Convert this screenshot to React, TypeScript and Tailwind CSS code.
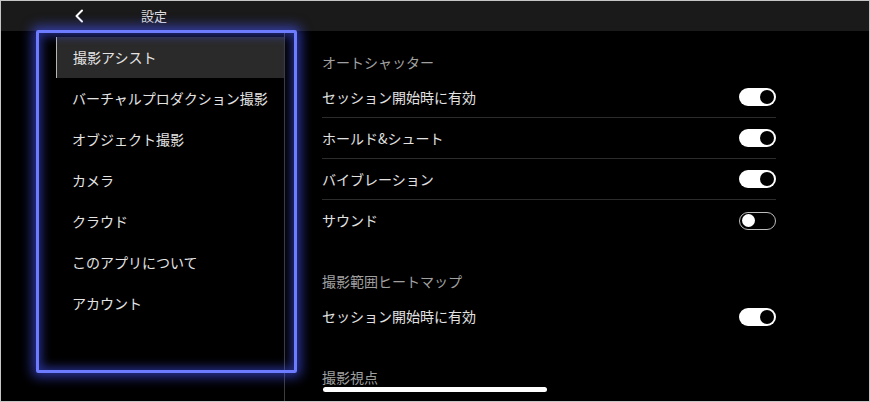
type Row = { label: string; on: boolean; divider?: boolean };

const menuItems = [
  "撮影アシスト",
  "バーチャルプロダクション撮影",
  "オブジェクト撮影",
  "カメラ",
  "クラウド",
  "このアプリについて",
  "アカウント",
];

const autoShutter: Row[] = [
  { label: "セッション開始時に有効", on: true, divider: true },
  { label: "ホールド&シュート", on: true, divider: true },
  { label: "バイブレーション", on: true, divider: true },
  { label: "サウンド", on: false },
];

const BackIcon = (): JSX.Element => (
  <svg
    width="10"
    height="14"
    viewBox="0 0 10 14"
    fill="none"
    stroke="white"
    strokeWidth="2"
    strokeLinecap="round"
    strokeLinejoin="round"
    className="ml-[73px]"
  >
    <path d="M8 1.5 2.5 7 8 12.5" />
  </svg>
);

const Toggle = ({ on }: { on: boolean }): JSX.Element => {
  if (on) {
    return (
      <span className="flex h-[18px] w-[37px] items-center justify-end rounded-full bg-white pr-[2px]">
        <span className="h-[14px] w-[14px] rounded-full bg-black" />
      </span>
    );
  }
  return (
    <span className="flex h-[18px] w-[37px] items-center rounded-full border border-[#bdbdbd] pl-[2px]">
      <span className="h-[13px] w-[13px] rounded-full bg-white" />
    </span>
  );
};

const SettingRow = ({ row }: { row: Row }): JSX.Element => (
  <div
    className={`flex h-[41px] items-center justify-between ${
      row.divider ? "border-b border-[#2c2c2c]" : ""
    }`}
  >
    <span className="text-[14px] text-[#e2e2e2]">{row.label}</span>
    <Toggle on={row.on} />
  </div>
);

const SectionTitle = ({
  title,
  first,
}: {
  title: string;
  first?: boolean;
}): JSX.Element => (
  <div
    className={`text-[14px] leading-[20px] text-[#a0a0a0] ${
      first ? "pt-[21px] pb-[5px]" : "pt-[30px] pb-[5px]"
    }`}
  >
    {title}
  </div>
);

const App = (): JSX.Element => {
  return (
    <div
      className="relative flex h-[402px] w-[870px] flex-col overflow-hidden border border-[#c6c6c6] bg-black"
      style={{ fontFamily: '"Noto Sans CJK JP", "Noto Sans", sans-serif' }}
    >
      <div className="flex h-[30px] shrink-0 items-center bg-[#1a1a1a]">
        <BackIcon />
        <span className="ml-[57px] text-[13px] text-[#e0e0e0]">設定</span>
      </div>
      <div className="flex min-h-0 flex-1">
        <div className="w-[284px] shrink-0 border-r border-[#3c3c3c] pt-[6px] pl-[55px]">
          {menuItems.map((item, i) => (
            <div
              key={item}
              className={`flex h-[41px] items-center pl-[16px] text-[14px] text-[#e4e4e4] ${
                i === 0 ? "border-l border-[#b5b5b5] bg-[#2a2a2a]" : ""
              }`}
            >
              {item}
            </div>
          ))}
        </div>
        <div className="w-[491px] pl-[37px]">
          <SectionTitle title="オートシャッター" first />
          {autoShutter.map((row) => (
            <SettingRow key={row.label} row={row} />
          ))}
          <SectionTitle title="撮影範囲ヒートマップ" />
          <SettingRow row={{ label: "セッション開始時に有効", on: true }} />
          <SectionTitle title="撮影視点" />
        </div>
      </div>
      {/* focus highlight */}
      <div className="pointer-events-none absolute left-[35px] top-[29px] h-[343px] w-[261px] rounded-[2px] border-[3px] border-[#6d7cff] shadow-[0_0_12px_4px_rgba(70,85,255,0.6),inset_0_0_10px_3px_rgba(70,85,255,0.5)]" />
      {/* scroll indicator */}
      <div className="absolute left-[322px] top-[386px] h-[5px] w-[224px] rounded-full bg-white" />
    </div>
  );
};

export default App;
